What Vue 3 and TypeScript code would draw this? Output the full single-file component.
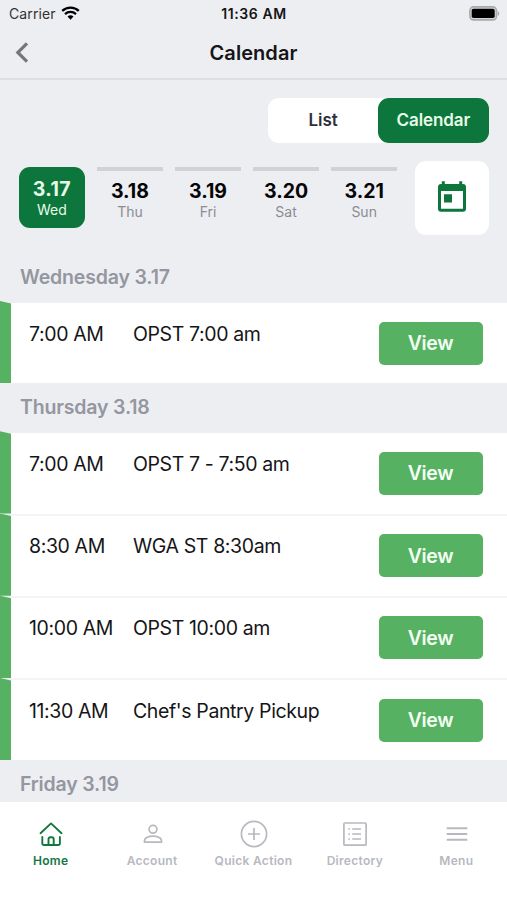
<script setup lang="ts">
interface Day { date: string; name: string }
interface Entry { time: string; title: string }
interface Section { label: string; entries: Entry[] }
interface Tab { id: string; label: string }

const activeDate = '3.17'
const activeTab = 'home'

const days: Day[] = [
  { date: '3.17', name: 'Wed' },
  { date: '3.18', name: 'Thu' },
  { date: '3.19', name: 'Fri' },
  { date: '3.20', name: 'Sat' },
  { date: '3.21', name: 'Sun' },
]

const sections: Section[] = [
  { label: 'Wednesday 3.17', entries: [{ time: '7:00 AM', title: 'OPST 7:00 am' }] },
  {
    label: 'Thursday 3.18',
    entries: [
      { time: '7:00 AM', title: 'OPST 7 - 7:50 am' },
      { time: '8:30 AM', title: 'WGA ST 8:30am' },
      { time: '10:00 AM', title: 'OPST 10:00 am' },
      { time: '11:30 AM', title: "Chef's Pantry Pickup" },
    ],
  },
  { label: 'Friday 3.19', entries: [] },
]

const tabs: Tab[] = [
  { id: 'home', label: 'Home' },
  { id: 'account', label: 'Account' },
  { id: 'quick', label: 'Quick Action' },
  { id: 'directory', label: 'Directory' },
  { id: 'menu', label: 'Menu' },
]
</script>

<template>
  <div class="screen">
    <div class="status">
      <div class="carrier">
        <span>Carrier</span>
        <svg class="wifi" width="19" height="14" viewBox="0 0 19 14">
          <path d="M1.2 4.9a12 12 0 0 1 16.6 0" fill="none" stroke="#000" stroke-width="2.3" />
          <path d="M4 8.1a8 8 0 0 1 11 0" fill="none" stroke="#000" stroke-width="2.2" />
          <path d="M6.5 10.6a4.4 4.4 0 0 1 6 0L9.5 13.7z" fill="#000" />
        </svg>
      </div>
      <span class="clock">11:36 AM</span>
      <svg class="battery" width="31" height="15" viewBox="0 0 31 15">
        <rect x="0.9" y="0.9" width="26.6" height="13" rx="3.6" fill="#d4d5d7" stroke="#a9aaac" stroke-width="1.6" />
        <rect x="2.7" y="2.7" width="23" height="9.4" rx="1.8" fill="#000" />
        <path d="M28.7 5v5c2.1-.8 2.1-4.2 0-5z" fill="#a9aaac" />
      </svg>
    </div>

    <header class="nav">
      <svg class="back" width="14" height="22" viewBox="0 0 14 22">
        <path d="M12 1.3 2.8 10.5 12 19.7" fill="none" stroke="#757678" stroke-width="3.2" />
      </svg>
      <h1>Calendar</h1>
    </header>

    <div class="toggle">
      <button class="option">List</button>
      <button class="option selected">Calendar</button>
    </div>

    <div class="picker">
      <div class="days">
        <div v-for="day in days" :key="day.date" class="day" :class="{ active: day.date === activeDate }">
          <strong>{{ day.date }}</strong>
          <span>{{ day.name }}</span>
        </div>
      </div>
      <button class="today" aria-label="Today">
        <svg width="28" height="31" viewBox="0 0 28 31">
          <path
            fill="#0c763c"
            fill-rule="evenodd"
            d="M3.8 .3h3v2.7h14.4V.3h3v2.7h.8A3 3 0 0 1 28 6v21.7a3 3 0 0 1-3 3H3a3 3 0 0 1-3-3V6a3 3 0 0 1 3-3h.8zM3 10v17.7h22V10zM6 13.3h8v8.2H6z"
          />
        </svg>
      </button>
    </div>

    <main class="agenda">
      <section v-for="section in sections" :key="section.label">
        <h2>{{ section.label }}</h2>
        <div v-for="entry in section.entries" :key="entry.time" class="entry">
          <i class="marker"></i>
          <div class="body">
            <span class="time">{{ entry.time }}</span>
            <span class="title">{{ entry.title }}</span>
            <button class="view">View</button>
          </div>
        </div>
      </section>
    </main>

    <nav class="tabs">
      <div v-for="tab in tabs" :key="tab.id" class="tab" :class="{ current: tab.id === activeTab }">
        <svg width="28" height="28" viewBox="0 0 28 28" fill="none" stroke="currentColor" stroke-width="1.7">
          <g v-if="tab.id === 'home'" stroke-width="1.9" stroke-linecap="round" stroke-linejoin="round">
            <path d="M3.5 13.2 14 3.4 24.5 13.2" />
            <path d="M5.3 17v6.2q0 1.8 1.8 1.8h4.4v-5.8q0-2 2-2h1.2q2 0 2 2V25h4.4q1.8 0 1.8-1.8V17" />
            <path d="M11.5 25h5.2" />
          </g>
          <g v-else-if="tab.id === 'account'">
            <circle cx="14" cy="9.3" r="3.9" />
            <path d="M5.5 22.2v-1.4c0-3 4.8-4.7 8.5-4.7s8.5 1.7 8.5 4.7v1.4z" />
          </g>
          <g v-else-if="tab.id === 'quick'">
            <circle cx="14" cy="14" r="12.6" />
            <path d="M14 8v12M8 14h12" />
          </g>
          <g v-else-if="tab.id === 'directory'">
            <rect x="2.9" y="3" width="22.2" height="22.2" rx="1" />
            <path d="M11.2 9h8.8M11.2 14h8.8M11.2 19h8.8M7.3 9h1.7M7.3 14h1.7M7.3 19h1.7" />
          </g>
          <path v-else stroke-width="1.9" d="M3.7 8.3h20.6M3.7 14h20.6M3.7 19.7h20.6" />
        </svg>
        <span>{{ tab.label }}</span>
      </div>
    </nav>
  </div>
</template>

<style>
body {
  background: #edeef2;
}
</style>

<style scoped>
.screen {
  width: 507px;
  height: 900px;
  overflow: hidden;
  display: flex;
  flex-direction: column;
  background: #edeef2;
  color: #151517;
  font-family: Inter, "Liberation Sans", sans-serif;
  white-space: nowrap;
}
button {
  border: 0;
  padding: 0;
  font-family: inherit;
}
.status {
  height: 27px;
  flex: none;
  display: grid;
  grid-template-columns: 1fr auto 1fr;
  align-items: center;
  padding: 0 7px 0 9px;
  box-sizing: border-box;
  font-size: 14px;
}
.carrier {
  display: flex;
  align-items: center;
  gap: 5px;
  color: #333;
  letter-spacing: 0.1px;
}
.wifi {
  margin-top: -2px;
}
.clock {
  font-weight: 600;
  letter-spacing: 0.6px;
  margin-left: -1px;
}
.battery {
  justify-self: end;
}
.nav {
  height: 53px;
  flex: none;
  box-sizing: border-box;
  border-bottom: 2px solid #dedfe2;
  display: grid;
  grid-template-columns: 1fr auto 1fr;
  align-items: center;
  padding: 0 15px;
}
h1 {
  margin: 0;
  font-size: 20px;
  font-weight: 600;
  line-height: 24px;
  letter-spacing: 0.05px;
}
.toggle {
  align-self: flex-end;
  flex: none;
  display: flex;
  width: 220.5px;
  height: 45px;
  margin: 17.5px 18.5px 0 0;
  border-radius: 11px;
  background: #fff;
}
.option {
  flex: 1;
  border-radius: 11px;
  background: transparent;
  color: #2e2f3d;
  font-size: 17px;
  font-weight: 600;
}
.selected {
  background: #0c763c;
  color: #e9fbe9;
  letter-spacing: -0.1px;
}
.picker {
  flex: none;
  display: flex;
  justify-content: space-between;
  height: 74px;
  margin: 18.5px 18.5px 0 19px;
}
.days {
  display: flex;
  gap: 12.4px;
  padding-top: 6px;
}
.day {
  width: 65.7px;
  height: 61px;
  box-sizing: border-box;
  padding-top: 8.5px;
  border-top: 4px solid #d0d2d6;
  display: flex;
  flex-direction: column;
  align-items: center;
  color: #8b8c93;
}
.day strong {
  font-size: 19.5px;
  line-height: 22px;
  font-weight: 700;
  color: #060607;
}
.day span {
  font-size: 14px;
  line-height: 19px;
}
.day.active {
  border-top: 0;
  border-radius: 11px;
  padding-top: 10.5px;
  background: #0c763c;
  color: #e9fbe9;
}
.day.active strong {
  color: #e9fbe9;
  letter-spacing: 0.4px;
}
.today {
  width: 74px;
  height: 74px;
  border-radius: 11px;
  background: #fff;
  display: grid;
  place-items: center;
}
.today svg {
  margin-top: -4px;
}
.agenda {
  height: 567px;
  flex: none;
  padding-top: 18px;
  box-sizing: border-box;
  overflow: hidden;
}
h2 {
  margin: 0;
  height: 48px;
  padding-left: 20px;
  line-height: 48px;
  font-size: 19.5px;
  font-weight: 600;
  letter-spacing: -0.17px;
  color: #9496a0;
}
.entry {
  height: 82.25px;
  display: flex;
}
.marker {
  width: 11px;
  background: #56b262;
  clip-path: polygon(0 0, 100% 2.5px, 100% 100%, 0 100%);
}
.body {
  flex: 1;
  box-sizing: border-box;
  border-top: 2px solid #f3f4f5;
  background: #fff;
  display: grid;
  grid-template-columns: 104px 1fr 104px;
  padding: 18.5px 24.5px 0 18px;
}
.entry:nth-child(2) .body {
  border-top-color: #edeef2;
}
.time,
.title {
  font-size: 19.5px;
  line-height: 24px;
  letter-spacing: -0.38px;
}
.view {
  height: 43px;
  border-radius: 5px;
  background: #56b262;
  color: #f3fff3;
  font-size: 19.5px;
  font-weight: 600;
  letter-spacing: -0.3px;
}
.tabs {
  height: 98px;
  flex: none;
  display: grid;
  grid-template-columns: repeat(5, 1fr);
  background: #fff;
}
.tab {
  display: flex;
  flex-direction: column;
  align-items: center;
  padding-top: 18px;
  color: #b7b9bf;
  font-size: 12px;
  font-weight: 600;
}
.tab svg {
  margin-left: 1px;
}
.tab span {
  line-height: 16px;
  margin-top: 5px;
  letter-spacing: 0.3px;
}
.tab.current {
  color: #12773f;
}
</style>
